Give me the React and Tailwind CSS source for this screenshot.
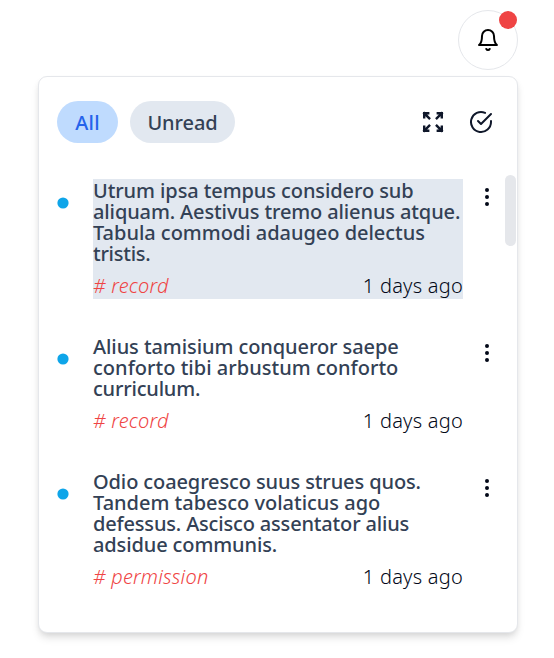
const notifications = [
  {
    lines: [
      ["Utrum ipsa tempus considero sub", "tracking-[-0.09px]"],
      ["aliquam. Aestivus tremo alienus atque.", "tracking-[-0.12px]"],
      ["Tabula commodi adaugeo delectus", "tracking-[-0.03px]"],
      ["tristis.", "tracking-[-0.25px]"],
    ],
    tag: "record",
    active: true,
  },
  {
    lines: [
      ["Alius tamisium conqueror saepe", "tracking-[-0.08px]"],
      ["conforto tibi arbustum conforto", "tracking-[0.02px]"],
      ["curriculum.", "tracking-[-0.2px]"],
    ],
    tag: "record",
  },
  {
    lines: [
      ["Odio coaegresco suus strues quos.", "tracking-[-0.11px]"],
      ["Tandem tabesco volaticus ago", "tracking-[-0.01px]"],
      ["defessus. Ascisco assentator alius", "tracking-[-0.17px]"],
      ["adsidue communis.", "tracking-[-0.12px]"],
    ],
    tag: "permission",
  },
];

function Icon({ children, className = "", cap = "round", join = "round", weight = 2 }) {
  return (
    <svg
      width="24"
      height="24"
      viewBox="0 0 24 24"
      fill="none"
      stroke="currentColor"
      strokeWidth={weight}
      strokeLinecap={cap}
      strokeLinejoin={join}
      className={"shrink-0 " + className}
    >
      {children}
    </svg>
  );
}

function Notification({ item }) {
  return (
    <li className="flex items-start">
      <svg className="mt-[18px] h-3 w-3 shrink-0 text-[#0ea5e9]" viewBox="0 0 12 12">
        <circle cx="6" cy="6" r="5.6" fill="currentColor" />
      </svg>
      <div className={"ml-6 w-[370px] " + (item.active ? "bg-[#e2e8f0]" : "")}>
        <p className="pt-px text-[20px] leading-[21px] font-medium text-[#334155]">
          {item.lines.map(([text, tracking]) => (
            <span key={text} className={"block whitespace-nowrap " + tracking}>
              {text}
            </span>
          ))}
        </p>
        <div className="mt-[8px] flex h-[27px] items-center justify-between text-[20px] leading-[27px] font-light">
          <span className="tracking-[0.2px] text-[#ef4444] italic"># {item.tag}</span>
          <span className="tracking-[0.24px] text-[#020817]">1 days ago</span>
        </div>
      </div>
      <Icon className="mt-[6px] ml-3 text-[#020817]">
        <circle cx="12" cy="12" r="1" />
        <circle cx="12" cy="5" r="1" />
        <circle cx="12" cy="19" r="1" />
      </Icon>
    </li>
  );
}

export default function App() {
  return (
    <div className="h-[658px] w-[554px] overflow-hidden bg-white pt-[10px] pl-[38px] font-['Noto_Sans',sans-serif]">
      <div className="flex w-[480px] justify-end">
        <button className="relative flex h-[60px] w-[60px] items-center justify-center rounded-full border border-[#e5e7eb] text-black">
          <Icon>
            <path d="M6 8a6 6 0 0 1 12 0c0 7 3 9 3 9H3s3-2 3-9" />
            <path d="M10.3 21a1.94 1.94 0 0 0 3.4 0" />
          </Icon>
          <span className="absolute top-0 right-0 h-[18px] w-[18px] rounded-full bg-[#ef4444]" />
        </button>
      </div>
      <section className="mt-[6px] h-[557px] w-[480px] rounded-[9px] border border-[#e5e7eb] bg-white pt-6 pl-[18px] shadow-[0_6px_9px_-1px_rgba(0,0,0,0.1),0_3px_6px_-2px_rgba(0,0,0,0.1)]">
        <header className="flex h-[42px] items-center pr-6">
          <button className="h-[42px] w-[61px] rounded-full bg-[#bfdbfe] pt-[2px] text-[20px] font-medium tracking-[0.2px] text-[#2563eb]">
            All
          </button>
          <button className="ml-3 h-[42px] w-[105px] rounded-full bg-[#e2e8f0] pt-[2px] text-[20px] font-medium tracking-[-0.1px] text-[#334155]">
            Unread
          </button>
          <div className="ml-auto flex gap-6 text-[#0f172a]">
            <Icon cap="square" join="miter" weight={2.4}>
              <path d="M20.8 16.8V20.8H16.8M20.8 20.8 15.8 15.8" />
              <path d="M3.2 16.8V20.8H7.2M3.2 20.8 8.2 15.8" />
              <path d="M20.8 7.2V3.2H16.8M20.8 3.2 15.8 8.2" />
              <path d="M3.2 7.2V3.2H7.2M3.2 3.2 8.2 8.2" />
            </Icon>
            <Icon>
              <path d="M22 11.08V12a10 10 0 1 1-5.93-9.14" />
              <path d="m9 11 3 3L22 4" />
            </Icon>
          </div>
        </header>
        <div className="mt-8 flex">
          <ul className="mt-1 flex flex-col gap-9">
            {notifications.map((item) => (
              <Notification key={item.lines[0][0]} item={item} />
            ))}
          </ul>
          <div className="ml-[6px] h-[71px] w-[11px] rounded-full bg-[#e5e7eb]" />
        </div>
      </section>
    </div>
  );
}
